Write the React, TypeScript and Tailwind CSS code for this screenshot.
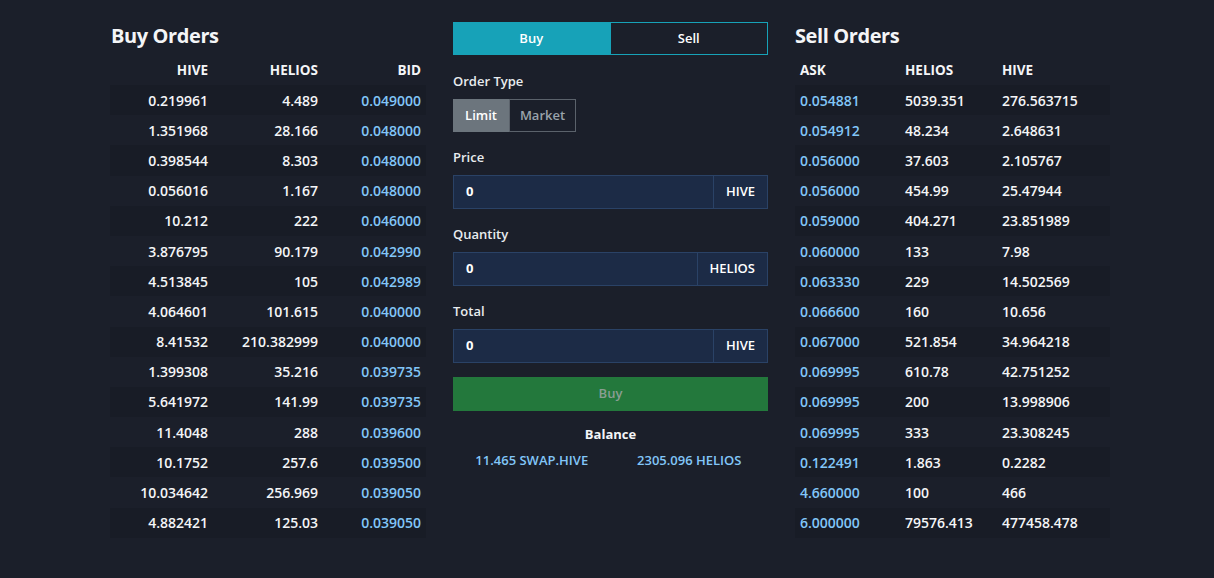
const buyOrders = [
  ["0.219961", "4.489", "0.049000"],
  ["1.351968", "28.166", "0.048000"],
  ["0.398544", "8.303", "0.048000"],
  ["0.056016", "1.167", "0.048000"],
  ["10.212", "222", "0.046000"],
  ["3.876795", "90.179", "0.042990"],
  ["4.513845", "105", "0.042989"],
  ["4.064601", "101.615", "0.040000"],
  ["8.41532", "210.382999", "0.040000"],
  ["1.399308", "35.216", "0.039735"],
  ["5.641972", "141.99", "0.039735"],
  ["11.4048", "288", "0.039600"],
  ["10.1752", "257.6", "0.039500"],
  ["10.034642", "256.969", "0.039050"],
  ["4.882421", "125.03", "0.039050"],
];

const sellOrders = [
  ["0.054881", "5039.351", "276.563715"],
  ["0.054912", "48.234", "2.648631"],
  ["0.056000", "37.603", "2.105767"],
  ["0.056000", "454.99", "25.47944"],
  ["0.059000", "404.271", "23.851989"],
  ["0.060000", "133", "7.98"],
  ["0.063330", "229", "14.502569"],
  ["0.066600", "160", "10.656"],
  ["0.067000", "521.854", "34.964218"],
  ["0.069995", "610.78", "42.751252"],
  ["0.069995", "200", "13.998906"],
  ["0.069995", "333", "23.308245"],
  ["0.122491", "1.863", "0.2282"],
  ["4.660000", "100", "466"],
  ["6.000000", "79576.413", "477458.478"],
];

function Field({ label, unit }: { label: string; unit: string }) {
  return (
    <div className="mt-[15px]">
      <div className="h-5 text-[13px] font-semibold leading-5 text-[#e9ecef]">{label}</div>
      <div className="mt-2 flex h-[34px] border border-[#2a4266] bg-[#1c2b46]">
        <div className="flex flex-1 items-center px-3 text-[13px] font-bold text-white">0</div>
        <div className="flex items-center border-l border-[#2a4266] px-3 text-[13px] font-semibold text-white">
          {unit}
        </div>
      </div>
    </div>
  );
}

export default function App() {
  return (
    <div
      className="min-h-screen bg-[#1b1f2a] text-[#f4f5f7]"
      style={{ fontFamily: '"Open Sans", "Noto Sans", sans-serif' }}
    >
      <div className="ml-[110px] flex w-[1000px] gap-[27px] pt-[22px]">
        {/* buy orders */}
        <section className="w-[316px]">
          <h2 className="h-[28px] pl-px text-[20px] font-bold leading-[28px] tracking-[-0.4px]">Buy Orders</h2>
          <table className="mt-[5px] w-full border-collapse text-[14px]">
            <thead>
              <tr className="h-[30px] text-[13.5px]">
                <th className="w-[103px] pr-[5px] text-right font-bold">HIVE</th>
                <th className="w-[110px] pr-[5px] text-right font-bold">HELIOS</th>
                <th className="pr-[5px] text-right font-bold">BID</th>
              </tr>
            </thead>
            <tbody>
              {buyOrders.map((r, i) => (
                <tr key={i} className={i % 2 === 0 ? "h-[30.2px] bg-[#181c26]" : "h-[30.2px]"}>
                  <td className="pr-[5px] text-right font-semibold">{r[0]}</td>
                  <td className="pr-[5px] text-right font-semibold">{r[1]}</td>
                  <td className="pr-[5px] text-right font-semibold text-[#82c6f8]">{r[2]}</td>
                </tr>
              ))}
            </tbody>
          </table>
        </section>

        {/* order form */}
        <section className="w-[315px]">
          <div className="flex h-[33px] text-[13px] font-semibold">
            <div className="flex flex-1 items-center justify-center bg-[#17a2b8] text-white">Buy</div>
            <div className="flex flex-1 items-center justify-center border border-[#17a2b8] text-white">Sell</div>
          </div>
          <div className="mt-4 h-5 text-[13px] font-semibold leading-5 text-[#e9ecef]">Order Type</div>
          <div className="mt-2 flex h-[33px] text-[13px] font-semibold">
            <div className="flex w-[56px] items-center justify-center bg-[#6c757d] text-white">Limit</div>
            <div className="flex w-[67px] items-center justify-center border border-[#5b626b] text-[#9aa3ab]">
              Market
            </div>
          </div>
          <Field label="Price" unit="HIVE" />
          <Field label="Quantity" unit="HELIOS" />
          <Field label="Total" unit="HIVE" />
          <button className="mt-[14px] flex h-[34px] w-full items-center justify-center bg-[#23783c] text-[13px] font-semibold text-[#8a9e93]">
            Buy
          </button>
          <div className="mt-[13px] h-5 text-center text-[13px] font-bold leading-5">Balance</div>
          <div className="mt-[7px] flex text-[13px] font-semibold text-[#82c6f8]">
            <div className="flex-1 text-center">11.465 SWAP.HIVE</div>
            <div className="flex-1 text-center">2305.096 HELIOS</div>
          </div>
        </section>

        {/* sell orders */}
        <section className="w-[315px]">
          <h2 className="h-[28px] text-[20px] font-bold leading-[28px] tracking-[-0.4px]">Sell Orders</h2>
          <table className="mt-[5px] w-full border-collapse text-[14px]">
            <thead>
              <tr className="h-[30px] text-[13.5px]">
                <th className="w-[105px] pl-[5px] text-left font-bold">ASK</th>
                <th className="w-[97px] pl-[5px] text-left font-bold">HELIOS</th>
                <th className="pl-[5px] text-left font-bold">HIVE</th>
              </tr>
            </thead>
            <tbody>
              {sellOrders.map((r, i) => (
                <tr key={i} className={i % 2 === 0 ? "h-[30.2px] bg-[#181c26]" : "h-[30.2px]"}>
                  <td className="pl-[5px] font-semibold text-[#82c6f8]">{r[0]}</td>
                  <td className="pl-[5px] font-semibold">{r[1]}</td>
                  <td className="pl-[5px] font-semibold">{r[2]}</td>
                </tr>
              ))}
            </tbody>
          </table>
        </section>
      </div>
    </div>
  );
}
